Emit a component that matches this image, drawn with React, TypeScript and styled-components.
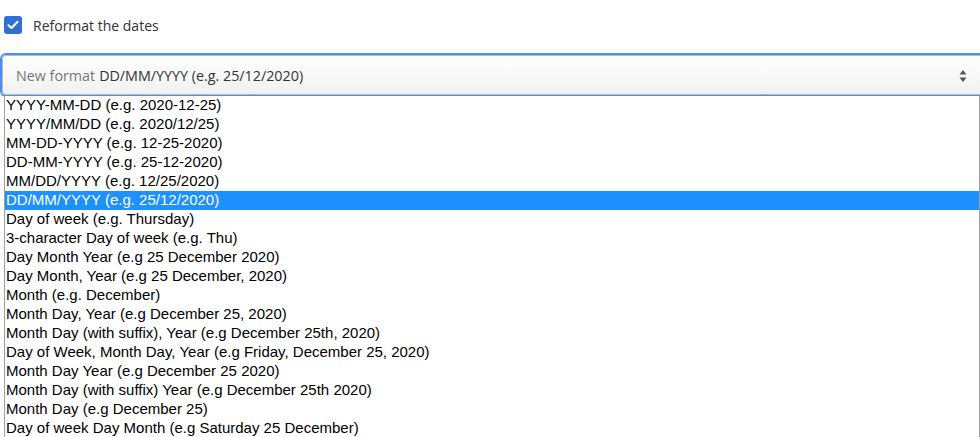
import React from "react";
import styled, { createGlobalStyle } from "styled-components";

const Global = createGlobalStyle`
  html, body { margin: 0; padding: 0; background: #fff; overflow: hidden; }
  body { width: 980px; height: 437px; }
`;

const Page = styled.div`
  position: relative;
  width: 980px;
  height: 437px;
  overflow: hidden;
  font-family: "Open Sans", "Noto Sans", sans-serif;
`;

const CheckRow = styled.label`
  display: flex;
  align-items: center;
  gap: 11px;
  padding: 16px 0 0 4px;
  height: 18px;
  font-size: 14px;
  color: #333;
`;

const Box = styled.span`
  width: 18px;
  height: 18px;
  border-radius: 3px;
  background: #2f6fd6;
  display: flex;
  align-items: center;
  justify-content: center;
`;

const SelectWrap = styled.div`
  position: relative;
  margin: 21px 0 0 2px;
  width: 1000px;
`;

const Select = styled.div`
  box-sizing: border-box;
  height: 40px;
  border: 1px solid #b9b9b9;
  border-radius: 4px;
  box-shadow: 0 0 0 2px #4a8ef0;
  background: linear-gradient(#ffffff, #f1f1f1);
  display: flex;
  align-items: center;
  padding-left: 13px;
  font-size: 14.3px;
  color: #333;
  position: relative;
`;

const Muted = styled.span`
  color: #777;
  margin-right: 4px;
`;

const Arrows = styled.svg`
  position: absolute;
  left: 955px;
  top: 13px;
`;

const List = styled.ul`
  position: absolute;
  left: 2px;
  top: 41px;
  width: 974px;
  margin: 0;
  padding: 0;
  list-style: none;
  background: #fff;
  border-left: 1px solid #a0a0a0;
  border-right: 1px solid #a0a0a0;
  font-family: "Liberation Sans", Arial, sans-serif;
  font-size: 15px;
  color: #000;
`;

const Option = styled.li<{ $sel?: boolean }>`
  height: 19px;
  line-height: 18px;
  padding-left: 1px;
  white-space: nowrap;
  background: ${(p) => (p.$sel ? "#1e90ff" : "transparent")};
  color: ${(p) => (p.$sel ? "#fff" : "#000")};
`;

const options = [
  "YYYY-MM-DD (e.g. 2020-12-25)",
  "YYYY/MM/DD (e.g. 2020/12/25)",
  "MM-DD-YYYY (e.g. 12-25-2020)",
  "DD-MM-YYYY (e.g. 25-12-2020)",
  "MM/DD/YYYY (e.g. 12/25/2020)",
  "DD/MM/YYYY (e.g. 25/12/2020)",
  "Day of week (e.g. Thursday)",
  "3-character Day of week (e.g. Thu)",
  "Day Month Year (e.g 25 December 2020)",
  "Day Month, Year (e.g 25 December, 2020)",
  "Month (e.g. December)",
  "Month Day, Year (e.g December 25, 2020)",
  "Month Day (with suffix), Year (e.g December 25th, 2020)",
  "Day of Week, Month Day, Year (e.g Friday, December 25, 2020)",
  "Month Day Year (e.g December 25 2020)",
  "Month Day (with suffix) Year (e.g December 25th 2020)",
  "Month Day (e.g December 25)",
  "Day of week Day Month (e.g Saturday 25 December)",
];

export default function App() {
  return (
    <Page>
      <Global />
      <CheckRow>
        <Box>
          <svg width="12" height="10" viewBox="0 0 12 10">
            <path d="M1.5 5.2 L4.5 8 L10.5 1.8" fill="none" stroke="#fff" strokeWidth="2" strokeLinecap="round" strokeLinejoin="round" />
          </svg>
        </Box>
        Reformat the dates
      </CheckRow>
      <SelectWrap>
        <Select>
          <Muted>New format</Muted>DD/MM/YYYY (e.g. 25/12/2020)
          <Arrows width="10" height="14" viewBox="0 0 10 14">
            <path d="M5 1 L8.5 5.5 H1.5 Z" fill="#555" />
            <path d="M5 13 L8.5 8.5 H1.5 Z" fill="#555" />
          </Arrows>
        </Select>
        <List>
          {options.map((o) => (
            <Option key={o} $sel={o.startsWith("DD/MM/YYYY")}>
              {o}
            </Option>
          ))}
        </List>
      </SelectWrap>
    </Page>
  );
}
